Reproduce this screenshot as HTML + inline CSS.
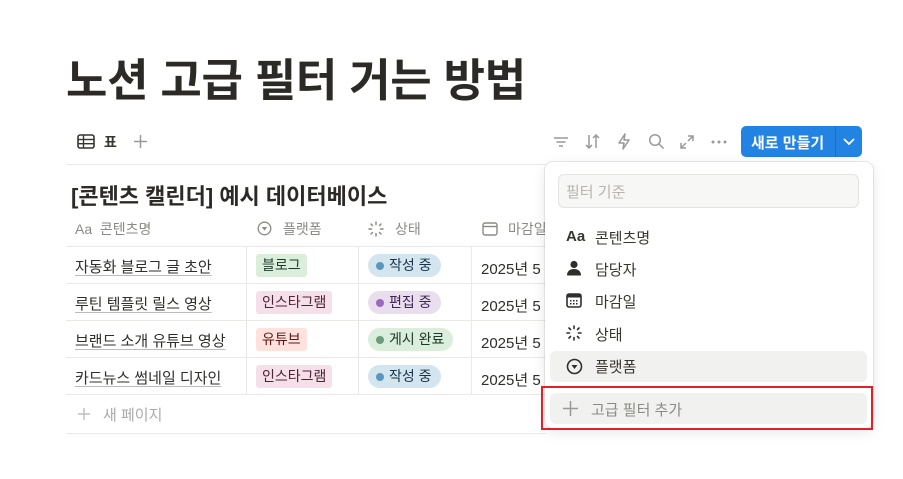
<!DOCTYPE html>
<html><head><meta charset="utf-8"><style>
*{margin:0;padding:0;box-sizing:border-box}
body{width:903px;height:479px;background:#fff;font-family:"Liberation Sans","Noto Sans CJK KR",sans-serif;color:#37352f;position:relative;overflow:hidden}
.a{position:absolute}
h1{position:absolute;left:66px;top:44px;font-size:45px;font-weight:700;color:#2b2a27;letter-spacing:-0.3px;white-space:nowrap}
.hl{position:absolute;height:1px;background:#e9e9e7}
.vl{position:absolute;width:1px;background:#e9e9e7}
.cell{position:absolute;font-size:15px;white-space:nowrap;color:#2f2e2b}
.u{text-decoration:underline;text-decoration-color:#bbb;text-underline-offset:3px}
.tag{position:absolute;font-size:14px;padding:0 6px;border-radius:3px;height:23px;line-height:23px;white-space:nowrap}
.st{position:absolute;font-size:14px;padding:0 9px 0 8px;border-radius:12px;height:23px;line-height:23px;white-space:nowrap}
.dot{display:inline-block;width:8px;height:8px;border-radius:50%;margin-right:5px;vertical-align:0px}
.hd{position:absolute;top:219px;font-size:14px;color:#8b8a86;white-space:nowrap}
.mi{position:absolute;left:566px;font-size:15px;color:#37352f;white-space:nowrap}
</style></head><body>
<h1>노션 고급 필터 거는 방법</h1>

<svg class="a" style="left:77px;top:134px" width="18" height="15" viewBox="0 0 18 15"><rect x="1" y="1" width="16" height="13" rx="2" fill="none" stroke="#37352f" stroke-width="1.6"/><line x1="1" y1="5.5" x2="17" y2="5.5" stroke="#37352f" stroke-width="1.4"/><line x1="1" y1="9.7" x2="17" y2="9.7" stroke="#37352f" stroke-width="1.4"/><line x1="6.5" y1="1" x2="6.5" y2="14" stroke="#37352f" stroke-width="1.4"/></svg>
<div class="a" style="left:104px;top:132px;font-size:14px;font-weight:700">표</div>
<svg class="a" style="left:134px;top:135px" width="13" height="13"><g stroke="#999" stroke-width="1.5"><line x1="6.5" y1="0" x2="6.5" y2="13"/><line x1="0" y1="6.5" x2="13" y2="6.5"/></g></svg>
<div class="hl" style="left:66px;top:164px;width:480px"></div>

<svg class="a" style="left:553px;top:135px" width="16" height="14"><g stroke="#999" stroke-width="1.5"><line x1="1" y1="3" x2="15" y2="3"/><line x1="3.5" y1="7" x2="12.5" y2="7"/><line x1="6" y1="11" x2="10" y2="11"/></g></svg>
<svg class="a" style="left:585px;top:133px" width="16" height="17"><g stroke="#999" stroke-width="1.5" fill="none"><path d="M4 2v13M1 12l3 3 3-3M11 15V2M8 5l3-3 3 3"/></g></svg>
<svg class="a" style="left:617px;top:133px" width="14" height="17"><path d="M8 1L2 10h5l-1 6 6-9H7z" fill="none" stroke="#999" stroke-width="1.5" stroke-linejoin="round"/></svg>
<svg class="a" style="left:648px;top:133px" width="17" height="17"><circle cx="7" cy="7" r="5.3" fill="none" stroke="#999" stroke-width="1.5"/><line x1="11" y1="11" x2="15.5" y2="15.5" stroke="#999" stroke-width="1.5"/></svg>
<svg class="a" style="left:679px;top:134px" width="16" height="16"><g stroke="#999" stroke-width="1.5" fill="none"><path d="M9 2h5v5M14 2L9 7M7 14H2V9M2 14l5-5"/></g></svg>
<svg class="a" style="left:711px;top:140px" width="16" height="4"><g fill="#999"><circle cx="2" cy="2" r="1.5"/><circle cx="8" cy="2" r="1.5"/><circle cx="14" cy="2" r="1.5"/></g></svg>
<div class="a" style="left:741px;top:126px;width:121px;height:31px;background:#2383e2;border-radius:5px"></div>
<div class="a" style="left:751px;top:132px;font-size:15px;font-weight:700;color:#fff">새로 만들기</div>
<div class="a" style="left:835px;top:126px;width:1px;height:31px;background:#1a6fc4"></div>
<svg class="a" style="left:842px;top:137px" width="14" height="10"><path d="M2 2l5 5 5-5" fill="none" stroke="#fff" stroke-width="1.8"/></svg>

<div class="a" style="left:71px;top:179px;font-size:22px;font-weight:700;color:#2b2a27;white-space:nowrap">[콘텐츠 캘린더] 예시 데이터베이스</div>

<div class="hd" style="left:75px">Aa&nbsp; 콘텐츠명</div>
<svg class="a" style="left:257px;top:221px" width="15" height="15"><circle cx="7.5" cy="7.5" r="6.3" fill="none" stroke="#8b8a86" stroke-width="1.3"/><path d="M4.8 6h5.4L7.5 9.6z" fill="#8b8a86"/></svg>
<div class="hd" style="left:283px">플랫폼</div>
<svg class="a" style="left:368px;top:221px" width="16" height="16"><g stroke="#8b8a86" stroke-width="1.5" stroke-linecap="round"><line x1="8" y1="1" x2="8" y2="3.5"/><line x1="8" y1="12.5" x2="8" y2="15"/><line x1="1" y1="8" x2="3.5" y2="8"/><line x1="12.5" y1="8" x2="15" y2="8"/><line x1="3" y1="3" x2="4.5" y2="4.5"/><line x1="11.5" y1="11.5" x2="13" y2="13"/><line x1="13" y1="3" x2="11.5" y2="4.5"/><line x1="3" y1="13" x2="4.5" y2="11.5"/></g></svg>
<div class="hd" style="left:395px">상태</div>
<svg class="a" style="left:482px;top:222px" width="16" height="14"><rect x="1" y="1" width="14" height="12" rx="2" fill="none" stroke="#8b8a86" stroke-width="1.4"/><line x1="1" y1="4.5" x2="15" y2="4.5" stroke="#8b8a86" stroke-width="1.4"/></svg>
<div class="hd" style="left:508px">마감일</div>

<div class="hl" style="left:66px;top:246px;width:480px"></div>
<div class="hl" style="left:66px;top:283px;width:480px"></div>
<div class="hl" style="left:66px;top:320px;width:480px"></div>
<div class="hl" style="left:66px;top:357px;width:480px"></div>
<div class="hl" style="left:66px;top:394px;width:480px"></div>
<div class="hl" style="left:66px;top:433px;width:480px"></div>
<div class="vl" style="left:246px;top:246px;height:148px"></div>
<div class="vl" style="left:358px;top:246px;height:148px"></div>
<div class="vl" style="left:471px;top:246px;height:148px"></div>

<div class="cell u" style="left:75px;top:256px">자동화 블로그 글 초안</div>
<div class="cell u" style="left:75px;top:293px">루틴 템플릿 릴스 영상</div>
<div class="cell u" style="left:75px;top:330px">브랜드 소개 유튜브 영상</div>
<div class="cell u" style="left:75px;top:367px">카드뉴스 썸네일 디자인</div>

<div class="tag" style="left:256px;top:254px;background:#dbeddb;color:#1c3829">블로그</div>
<div class="tag" style="left:256px;top:291px;background:#f5e0e9;color:#4c2337">인스타그램</div>
<div class="tag" style="left:256px;top:328px;background:#ffe2dd;color:#5d1715">유튜브</div>
<div class="tag" style="left:256px;top:365px;background:#f5e0e9;color:#4c2337">인스타그램</div>

<div class="st" style="left:368px;top:254px;background:#d3e5ef;color:#183347"><span class="dot" style="background:#5b97bd"></span>작성 중</div>
<div class="st" style="left:368px;top:291px;background:#e8deee;color:#412454"><span class="dot" style="background:#9d68c0"></span>편집 중</div>
<div class="st" style="left:368px;top:328px;background:#dbeddb;color:#1c3829"><span class="dot" style="background:#6c9b7d"></span>게시 완료</div>
<div class="st" style="left:368px;top:365px;background:#d3e5ef;color:#183347"><span class="dot" style="background:#5b97bd"></span>작성 중</div>

<div class="cell" style="left:481px;top:258px">2025년 5</div>
<div class="cell" style="left:481px;top:295px">2025년 5</div>
<div class="cell" style="left:481px;top:332px">2025년 5</div>
<div class="cell" style="left:481px;top:369px">2025년 5</div>

<svg class="a" style="left:78px;top:408px" width="12" height="12"><g stroke="#bbb" stroke-width="1.4"><line x1="6" y1="0" x2="6" y2="12"/><line x1="0" y1="6" x2="12" y2="6"/></g></svg>
<div class="a" style="left:103px;top:404px;font-size:15px;color:#aaa">새 페이지</div>

<div class="a" style="left:545px;top:162px;width:328px;height:266px;background:#fff;border-radius:8px;box-shadow:0 0 0 1px rgba(0,0,0,.08),0 4px 14px rgba(0,0,0,.1)"></div>
<div class="a" style="left:558px;top:174px;width:301px;height:34px;background:#f7f7f5;border:1px solid #e3e3e1;border-radius:6px"></div>
<div class="a" style="left:566px;top:181px;font-size:15px;color:#b5b4b0">필터 기준</div>

<div class="a" style="left:566px;top:228px;font-size:15px;font-weight:700">Aa</div>
<div class="mi" style="left:595px;top:227px">콘텐츠명</div>
<svg class="a" style="left:566px;top:260px" width="16" height="16"><circle cx="8" cy="4.5" r="3.6" fill="#2f2e2b"/><path d="M1 15.5c0-4.5 3-6.5 7-6.5s7 2 7 6.5z" fill="#2f2e2b"/></svg>
<div class="mi" style="left:595px;top:259px">담당자</div>
<svg class="a" style="left:566px;top:293px" width="16" height="15"><rect x="1" y="1" width="14" height="13" rx="2" fill="none" stroke="#2f2e2b" stroke-width="1.6"/><rect x="1" y="1" width="14" height="3.5" fill="#2f2e2b"/><g fill="#2f2e2b"><rect x="4" y="7" width="1.5" height="1.5"/><rect x="7" y="7" width="1.5" height="1.5"/><rect x="10" y="7" width="1.5" height="1.5"/><rect x="4" y="10" width="1.5" height="1.5"/><rect x="7" y="10" width="1.5" height="1.5"/><rect x="10" y="10" width="1.5" height="1.5"/></g></svg>
<div class="mi" style="left:595px;top:291px">마감일</div>
<svg class="a" style="left:566px;top:325px" width="16" height="16"><g stroke="#2f2e2b" stroke-width="1.6" stroke-linecap="round"><line x1="8" y1="1" x2="8" y2="3.5"/><line x1="8" y1="12.5" x2="8" y2="15"/><line x1="1" y1="8" x2="3.5" y2="8"/><line x1="12.5" y1="8" x2="15" y2="8"/><line x1="3" y1="3" x2="4.5" y2="4.5"/><line x1="11.5" y1="11.5" x2="13" y2="13"/><line x1="13" y1="3" x2="11.5" y2="4.5"/><line x1="3" y1="13" x2="4.5" y2="11.5"/></g></svg>
<div class="mi" style="left:595px;top:324px">상태</div>
<div class="a" style="left:550px;top:351px;width:317px;height:31px;background:#f1f1ef;border-radius:6px"></div>
<svg class="a" style="left:566px;top:358px" width="17" height="17"><circle cx="8.5" cy="8.5" r="7" fill="none" stroke="#2f2e2b" stroke-width="1.6"/><path d="M5.5 7h6l-3 4z" fill="#2f2e2b"/></svg>
<div class="mi" style="left:595px;top:356px">플랫폼</div>

<div class="a" style="left:550px;top:393px;width:317px;height:31px;background:#f1f1ef;border-radius:6px"></div>
<div class="a" style="left:541px;top:386px;width:332px;height:44px;border:2px solid #e0202a"></div>
<svg class="a" style="left:563px;top:401px" width="15" height="15"><g stroke="#999" stroke-width="1.5"><line x1="7.5" y1="0" x2="7.5" y2="15"/><line x1="0" y1="7.5" x2="15" y2="7.5"/></g></svg>
<div class="a" style="left:591px;top:399px;font-size:15px;color:#8b8a86">고급 필터 추가</div>
</body></html>
